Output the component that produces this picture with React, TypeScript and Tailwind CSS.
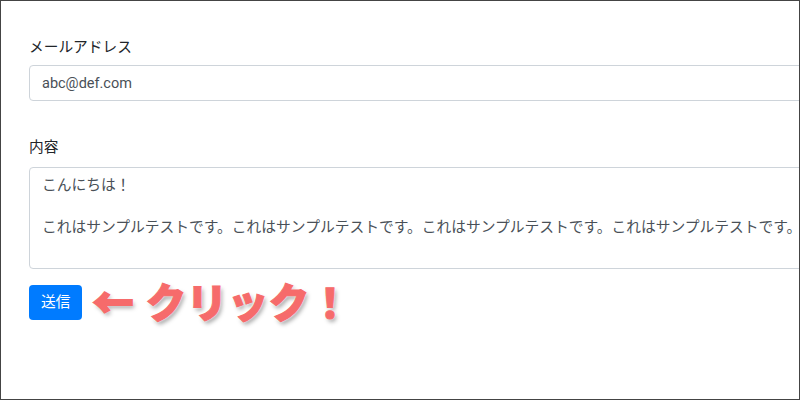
import React from "react";

const jp = "font-['Roboto','Noto_Sans_CJK_JP',sans-serif]";

export default function App() {
  const body =
    "こんにちは！\n\nこれはサンプルテストです。これはサンプルテストです。これはサンプルテストです。これはサンプルテストです。";

  return (
    <div className={`w-[800px] h-[400px] overflow-hidden bg-white border border-[#444] ${jp}`}>
      <div className="pl-[28px] pt-[35px] flex flex-col items-start">
        {/* メールアドレス */}
        <label className="text-[14.7px] leading-[22px] text-[#212529]">メールアドレス</label>
        <input
          type="text"
          readOnly
          value="abc@def.com"
          className="mt-[7px] w-[820px] h-[36px] px-[12px] text-[14.5px] text-[#495057] border border-[#ced4da] rounded-[4px] bg-white outline-none"
        />

        {/* 内容 */}
        <label className="mt-[35px] text-[14.7px] leading-[22px] text-[#212529]">内容</label>
        <textarea
          readOnly
          value={body}
          rows={4}
          className="mt-[9px] w-[830px] h-[102px] px-[12px] pt-[7px] text-[14.75px] leading-[21px] text-[#495057] border border-[#ced4da] rounded-[4px] bg-white outline-none resize-none whitespace-pre overflow-hidden"
        />

        <div className="mt-[15px] flex items-center">
          <button className="h-[35px] px-[12px] rounded-[4px] bg-[#007bff] text-white text-[14.7px] leading-none">
            送信
          </button>
          <div className="ml-[10px] -mt-[4px] flex items-center text-[41px] leading-none font-black text-[#f66b6b] [-webkit-text-stroke:1px_#f66b6b] [text-shadow:0_0_2px_#fff,0_0_3px_#fff,2px_3px_4px_rgba(0,0,0,0.35)] font-['Noto_Sans_CJK_JP',sans-serif]">
            <span className="[-webkit-text-stroke:2px_#f66b6b]">←</span>
            <span className="ml-[12px]">クリック！</span>
          </div>
        </div>
      </div>
    </div>
  );
}
